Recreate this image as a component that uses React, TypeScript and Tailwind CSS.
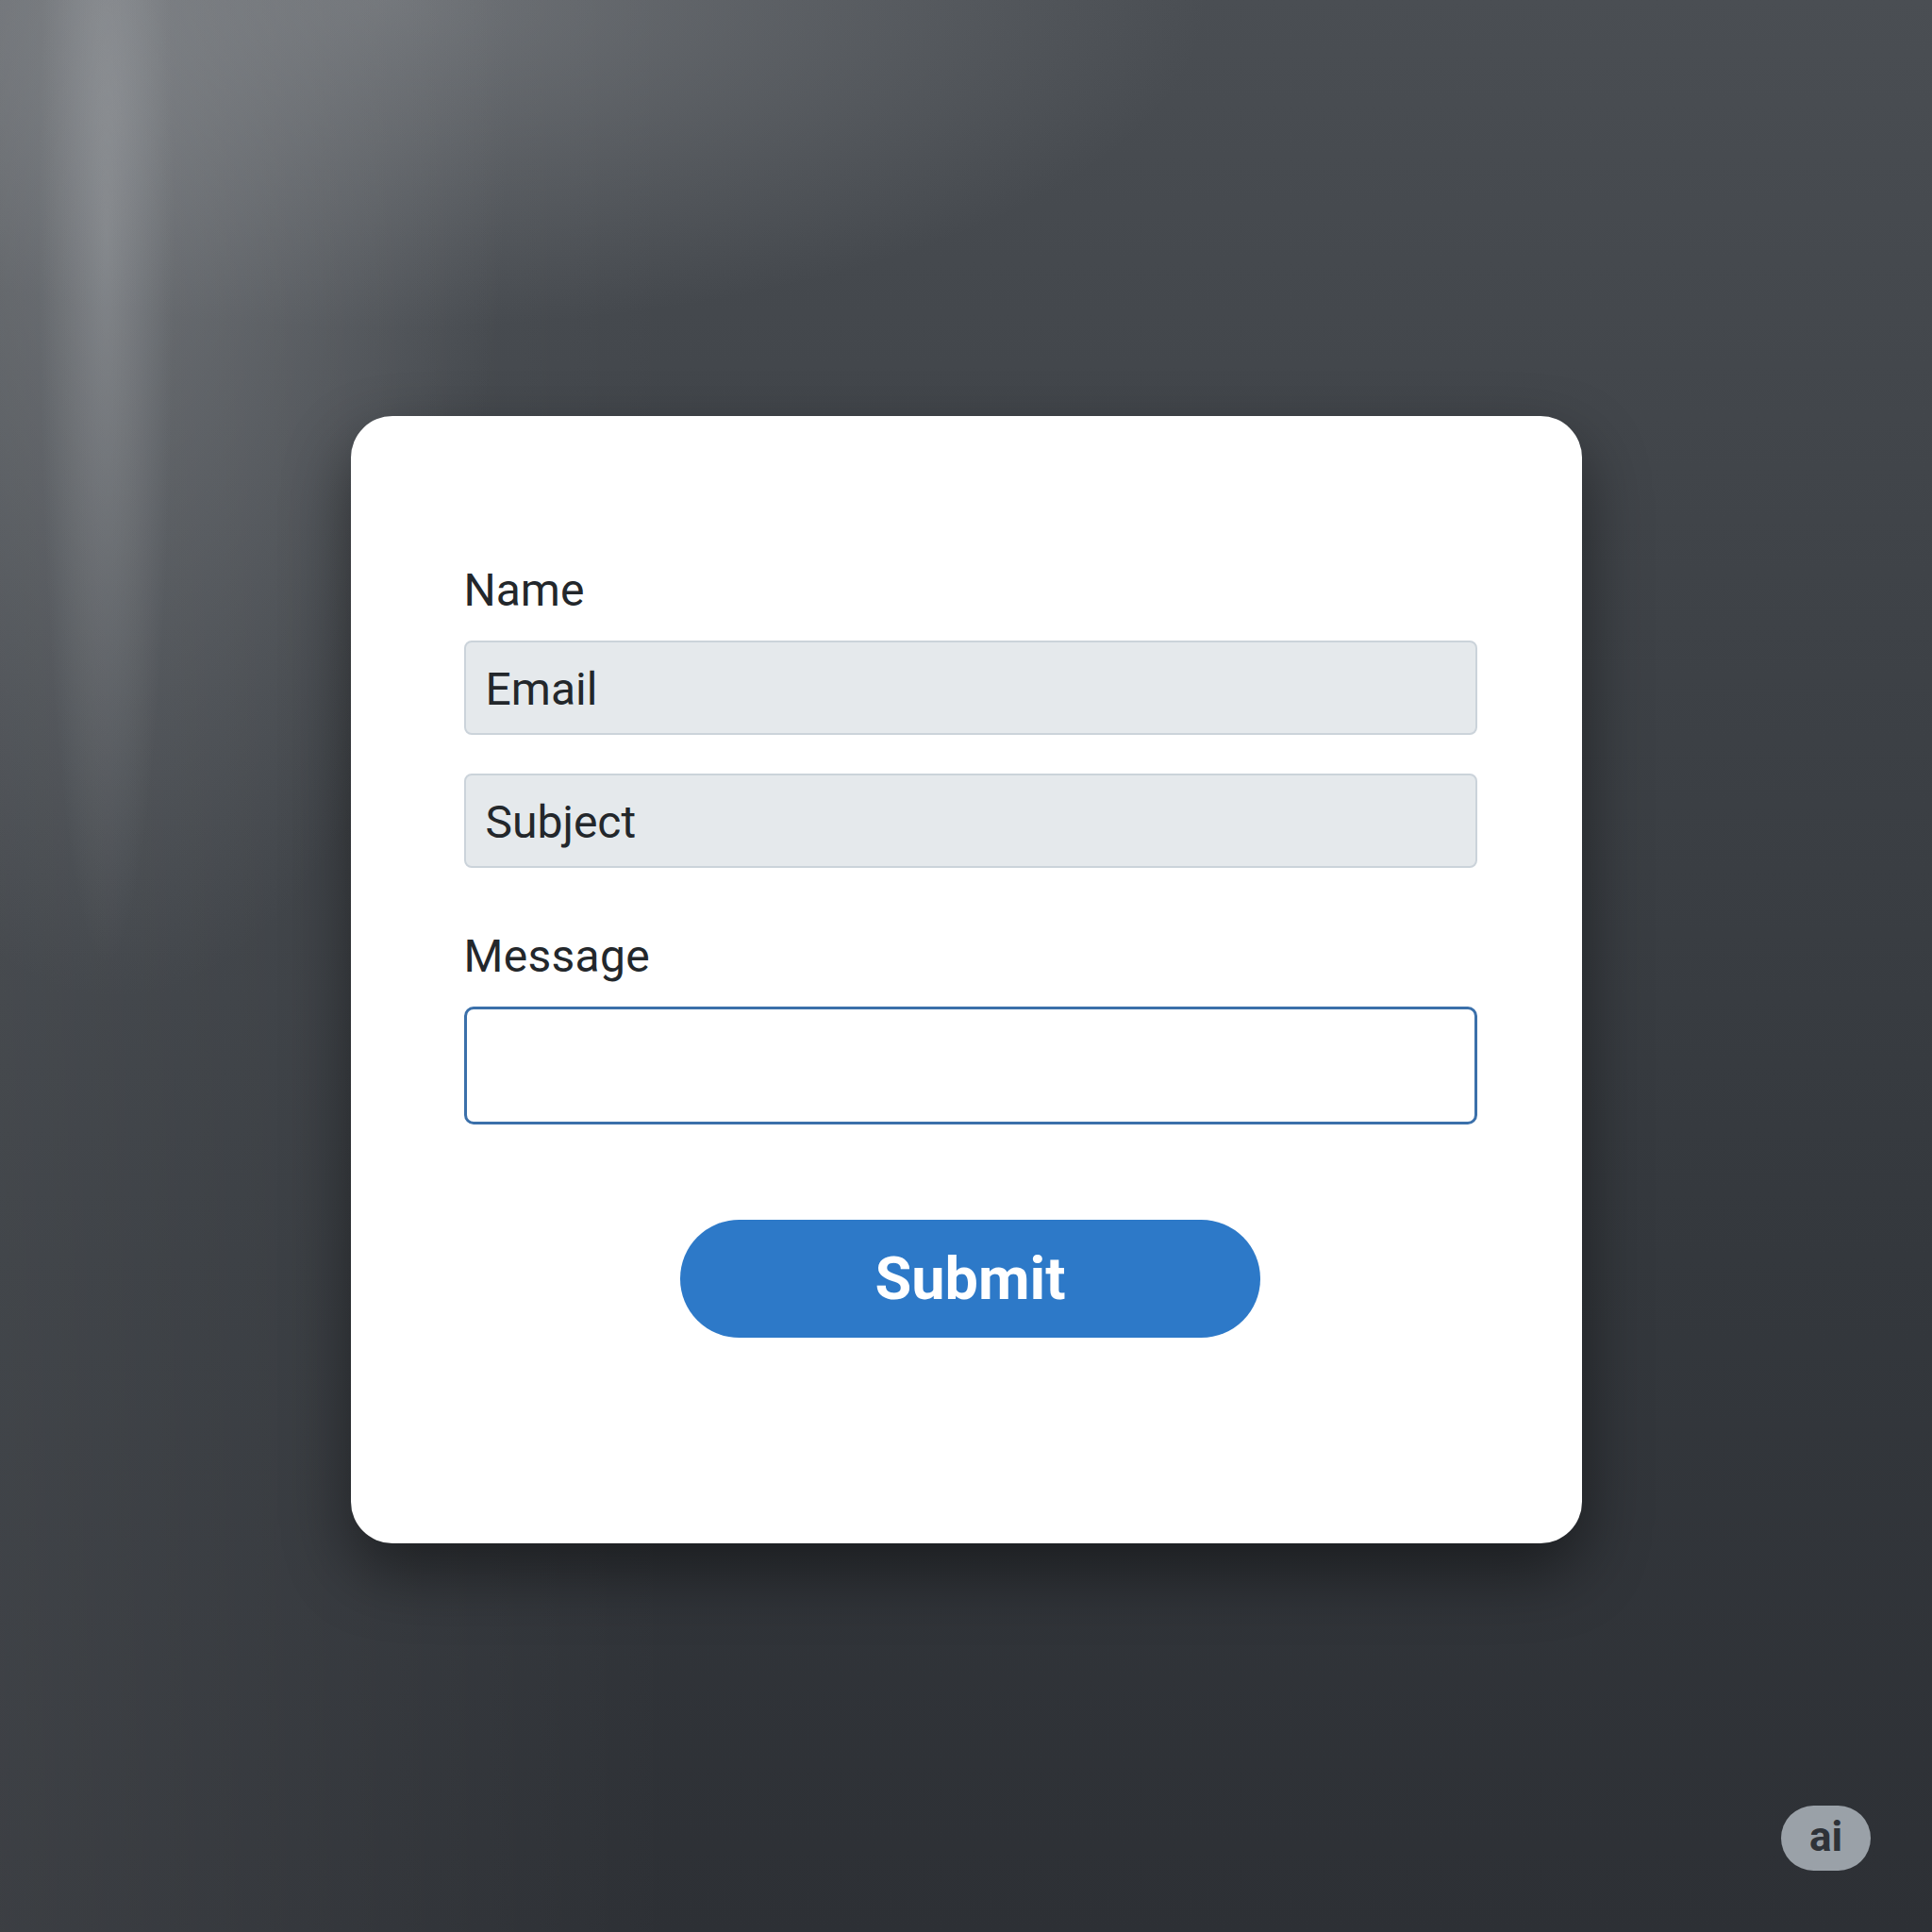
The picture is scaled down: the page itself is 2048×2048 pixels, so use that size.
import React from "react";

const Field = ({ text }: { text: string }) => (
  <div className="flex items-center h-[100px] w-full rounded-[8px] border-2 border-[#cbd3da] bg-[#e5e9ec] pl-[21px] pt-[3px] text-[48px] leading-none text-[#23272b]">
    {text}
  </div>
);

const App = () => {
  return (
    <div className="relative flex h-[2048px] w-full justify-center pt-[441px] font-['Roboto',sans-serif] bg-[radial-gradient(ellipse_3.5%_38%_at_5.5%_12%,rgba(175,178,182,0.35),transparent_100%),radial-gradient(ellipse_24%_55%_at_6%_5%,rgba(150,153,157,0.45),transparent_85%),radial-gradient(ellipse_50%_20%_at_20%_0%,rgba(150,153,157,0.45),transparent_85%),linear-gradient(90deg,rgba(255,255,255,0.07),transparent_35%),linear-gradient(180deg,#4a4e53_0%,#3d4146_35%,#34383d_65%,#2d3035_100%)]">
      {/* card */}
      <div className="flex h-[1195px] w-[1305px] flex-col rounded-[44px] bg-white pt-[157px] pl-[120px] pr-[111px] shadow-[0_30px_70px_rgba(0,0,0,0.45)]">
        <label className="text-[48px] leading-[56px] text-[#23272b]">Name</label>
        <div className="mt-[25px]">
          <Field text="Email" />
        </div>
        <div className="mt-[41px]">
          <Field text="Subject" />
        </div>
        <label className="mt-[66px] text-[48px] leading-[56px] tracking-[0.3px] text-[#23272b]">
          Message
        </label>
        <div className="mt-[25px] h-[125px] w-full rounded-[10px] border-[3px] border-[#3b70aa] bg-white" />
        <div className="mt-[101px] flex justify-center">
          <button className="h-[125px] w-[615px] rounded-full bg-[#2d79c8] text-[63px] font-bold leading-none text-white">
            Submit
          </button>
        </div>
      </div>

      {/* corner badge */}
      <div className="absolute left-[1888px] top-[1914px] flex h-[69px] w-[95px] items-center justify-center rounded-full bg-[#9aa1a8] pb-[3px] text-[44px] font-bold leading-none text-[#2e3238]">
        ai
      </div>
    </div>
  );
};

export default App;
